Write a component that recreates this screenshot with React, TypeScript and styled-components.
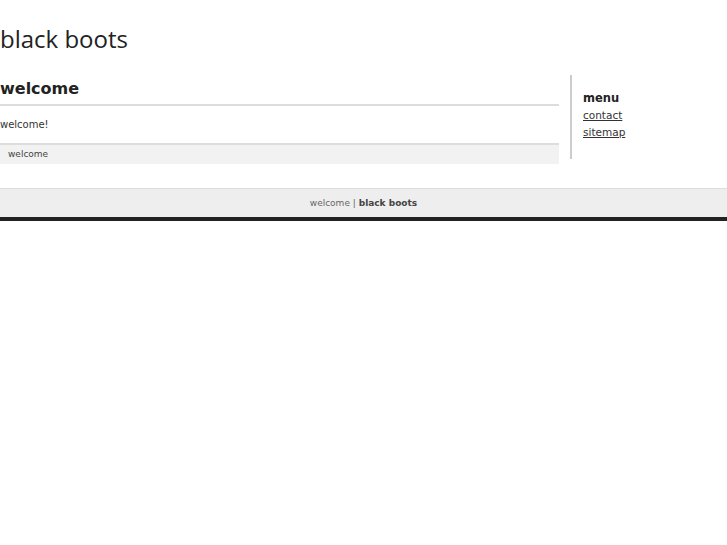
import React from "react";
import styled, { createGlobalStyle } from "styled-components";

const Global = createGlobalStyle`
  html, body { margin: 0; padding: 0; background: #fff; }
  body { font-family: "DejaVu Sans", Verdana, sans-serif; color: #333; }
`;

const Header = styled.header`
  height: 75px;
  box-sizing: border-box;
  padding-top: 22px;
`;

const SiteTitle = styled.h1`
  margin: 0;
  font-family: "Open Sans", "DejaVu Sans", sans-serif;
  font-size: 24px;
  font-weight: normal;
  color: #222;
  line-height: 34px;
`;

const Body = styled.div`
  display: flex;
  align-items: flex-start;
`;

const Main = styled.main`
  width: 559px;
`;

const PageTitle = styled.h2`
  margin: 0;
  padding-top: 3px;
  height: 26px;
  font-size: 16px;
  font-weight: bold;
  color: #222;
  line-height: 22px;
  border-bottom: 2px solid #ddd;
`;

const Text = styled.p`
  margin: 0;
  height: 37px;
  font-size: 10px;
  line-height: 37px;
  color: #333;
  border-bottom: 2px solid #ddd;
`;

const Crumbs = styled.div`
  height: 19px;
  background: #f2f2f2;
  padding-left: 8px;
  font-size: 9px;
  line-height: 18px;
  color: #444;
`;

const Sidebar = styled.aside`
  margin-left: 11px;
  border-left: 2px solid #ccc;
  padding: 15px 0 0 11px;
  height: 69px;
`;

const MenuTitle = styled.h3`
  margin: 0 0 1px;
  font-size: 11.5px;
  font-weight: bold;
  color: #222;
  line-height: 16px;
`;

const MenuLink = styled.a`
  display: block;
  font-size: 10.5px;
  line-height: 17px;
  color: #333;
  text-decoration: underline;
`;

const Footer = styled.footer`
  margin-top: 24px;
  height: 28px;
  background: #eee;
  border-top: 1px solid #ddd;
  border-bottom: 4px solid #222;
  text-align: center;
  font-size: 9px;
  line-height: 28px;
  color: #666;
`;

const FooterStrong = styled.strong`
  color: #444;
`;

export default function App() {
  return (
    <>
      <Global />
      <Header>
        <SiteTitle>black boots</SiteTitle>
      </Header>
      <Body>
        <Main>
          <PageTitle>welcome</PageTitle>
          <Text>welcome!</Text>
          <Crumbs>welcome</Crumbs>
        </Main>
        <Sidebar>
          <MenuTitle>menu</MenuTitle>
          <MenuLink href="#">contact</MenuLink>
          <MenuLink href="#">sitemap</MenuLink>
        </Sidebar>
      </Body>
      <Footer>
        welcome | <FooterStrong>black boots</FooterStrong>
      </Footer>
    </>
  );
}
